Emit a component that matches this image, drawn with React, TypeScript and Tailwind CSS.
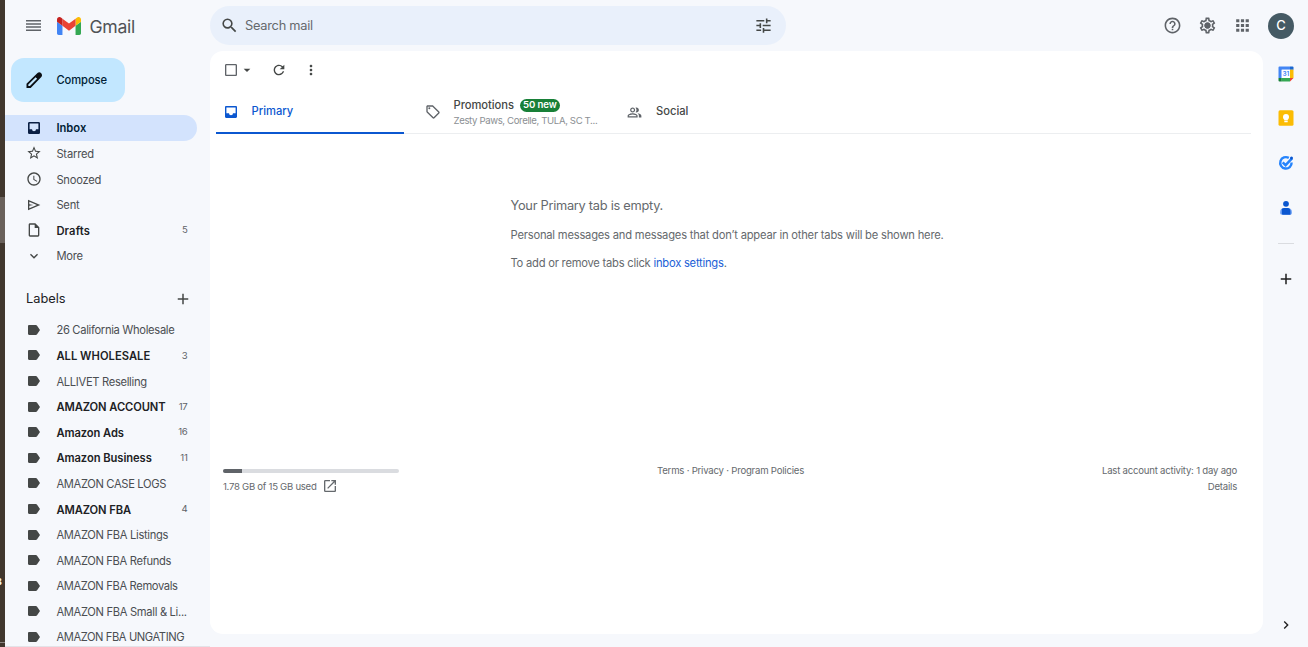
import React from "react";
import type { IconType } from "react-icons";
import {
  MdSearch, MdTune, MdHelpOutline, MdOutlineSettings, MdApps, MdStarBorder, MdAccessTime,
  MdOutlineInsertDriveFile, MdKeyboardArrowDown, MdAdd, MdOutlineSell,
  MdOutlinePeopleAlt, MdRefresh, MdMoreVert, MdArrowDropDown, MdCheckBoxOutlineBlank, MdOpenInNew, MdChevronRight,
} from "react-icons/md";

type IconProps = { className?: string };
type Row = { icon?: IconType | React.FC<IconProps>; text: string; count?: string; bold?: boolean; active?: boolean; track: string };

function InboxIcon({ className }: IconProps) {
  return (
    <svg viewBox="0 0 24 24" className={className} fill="currentColor">
      <path fillRule="evenodd" d="M5 3h14a2 2 0 0 1 2 2v14a2 2 0 0 1-2 2H5a2 2 0 0 1-2-2V5c0-1.100.9-2 2-2zm.4 2.400V14H9a3 3 0 0 0 6 0h3.600V5.400z" />
    </svg>
  );
}

function SendIcon({ className }: IconProps) {
  return (
    <svg viewBox="0 0 24 24" className={className} fill="currentColor" fillRule="evenodd">
      <path d="M3 20V4l18.500 8L3 20zm2-3.200L16.300 12 5 7.200v3.500l6 1.300-6 1.300z" />
    </svg>
  );
}

function LabelIcon({ className }: IconProps) {
  return (
    <svg viewBox="0 0 16 16" className={className} fill="currentColor">
      <path d="M3.200 3h6.600c.5 0 1 .25 1.300.7L14 8l-2.900 4.300c-.3.450-.8.7-1.300.7H3.200C2.500 13 2 12.500 2 11.800V4.200C2 3.500 2.500 3 3.200 3z" />
    </svg>
  );
}

function SettingsIcon({ className }: IconProps) {
  return (
    <svg viewBox="0 0 24 24" className={className} fill="currentColor">
      <MdOutlineSettings width="24" height="24" size={24} />
      <circle cx="12" cy="12" r="3.600" />
    </svg>
  );
}

const folders: Row[] = [
  { icon: InboxIcon, text: "Inbox", bold: true, active: true, track: "tracking-[0px]" },
  { icon: MdStarBorder, text: "Starred", track: "tracking-[-0.2px]" },
  { icon: MdAccessTime, text: "Snoozed", track: "tracking-[-0.25px]" },
  { icon: SendIcon, text: "Sent", track: "tracking-[-0.2px]" },
  { icon: MdOutlineInsertDriveFile, text: "Drafts", count: "5", bold: true, track: "tracking-[0.15px]" },
  { icon: MdKeyboardArrowDown, text: "More", track: "tracking-[-0.25px]" },
];

const labels: Row[] = [
  { text: "26 California Wholesale", track: "tracking-[-0.32px]" },
  { text: "ALL WHOLESALE", count: "3", bold: true, track: "tracking-[0.03px]" },
  { text: "ALLIVET Reselling", track: "tracking-[-0.32px]" },
  { text: "AMAZON ACCOUNT", count: "17", bold: true, track: "tracking-[-0.08px]" },
  { text: "Amazon Ads", count: "16", bold: true, track: "tracking-[-0.08px]" },
  { text: "Amazon Business", count: "11", bold: true, track: "tracking-[-0.06px]" },
  { text: "AMAZON CASE LOGS", track: "tracking-[-0.34px]" },
  { text: "AMAZON FBA", count: "4", bold: true, track: "tracking-[-0.08px]" },
  { text: "AMAZON FBA Listings", track: "tracking-[-0.32px]" },
  { text: "AMAZON FBA Refunds", track: "tracking-[-0.34px]" },
  { text: "AMAZON FBA Removals", track: "tracking-[-0.36px]" },
  { text: "AMAZON FBA Small & Li...", track: "tracking-[-0.32px]" },
  { text: "AMAZON FBA UNGATING", track: "tracking-[-0.42px]" },
];

function NavRow({ row }: { row: Row }) {
  const Icon = row.icon ?? LabelIcon;
  return (
    <div
      className={
        "flex h-[25.6px] w-[192px] shrink-0 items-center rounded-r-full pl-[21px] pr-[9.5px] text-[11.2px] whitespace-nowrap " +
        (row.active ? "bg-[#d3e3fd] text-[#001d35]" : row.bold ? "text-[#202124]" : "text-[#4b4e52]")
      }
    >
      <Icon className={"size-4 shrink-0 " + (row.active ? "text-[#0a1f44]" : "text-[#444746]")} />
      <span className={"ml-[14.4px] flex-1 pt-[2px] " + row.track + (row.bold ? " font-semibold" : "")}>{row.text}</span>
      {row.count && <span className="pt-px text-[9.6px] tracking-[-0.3px] text-[#5f6368]">{row.count}</span>}
    </div>
  );
}

function GmailLogo() {
  return (
    <svg viewBox="52 42 88 66" className="h-[18px] w-6">
      <path fill="#4285f4" d="M58 108h14V74L52 59v43c0 3.32 2.69 6 6 6" />
      <path fill="#34a853" d="M120 108h14c3.32 0 6-2.69 6-6V59l-20 15" />
      <path fill="#fbbc04" d="M120 48v26l20-15v-8c0-7.42-8.47-11.65-14.4-7.2" />
      <path fill="#ea4335" d="M72 74V48l24 18 24-18v26L96 92" />
      <path fill="#c5221f" d="M52 51v8l20 15V48l-5.6-4.2c-5.94-4.45-14.4-.22-14.4 7.2" />
    </svg>
  );
}

function Sidebar() {
  return (
    <aside className="flex h-full w-[205px] shrink-0 flex-col overflow-hidden border-b border-[#e3e3e8]">
      <div className="flex h-[51px] shrink-0 items-center pl-[21px]">
        <svg viewBox="0 0 15 11" className="h-[11px] w-[15px]" fill="#5f6368">
          <path d="M0 0h15v1.500H0zM0 3.200h15v1.500H0zM0 6.300h15v1.500H0zM0 9.500h15v1.500H0z" />
        </svg>
        <div className="ml-[16px] flex items-center"><GmailLogo /></div>
        <span className="ml-[8.5px] pt-[2px] text-[17.6px] leading-none tracking-[-0.3px] text-[#505356]">Gmail</span>
      </div>
      <div className="mt-[7px] ml-[6px] flex h-[44px] w-[114px] shrink-0 items-center rounded-[13px] bg-[#c2e7ff] pl-[13px]">
        <svg viewBox="0 0 24 24" className="h-[20px] w-[20px]" fill="#0b0f14">
          <path fillRule="evenodd" d="M20.400 3.600c-1.200-1.200-3-1.200-4.200 0L3 16.500V21.500h5L20.800 8.400c1.300-1.300 1-3.400-.4-4.800zM7.100 19.300H5.200v-1.900L13.900 8.700l1.900 1.900z" />
        </svg>
        <span className="ml-[12.4px] text-[11.2px] font-medium tracking-[-0.08px] text-[#001d35]">Compose</span>
      </div>
      <nav className="mt-[13px] flex flex-col">
        {folders.map((r) => <NavRow key={r.text} row={r} />)}
      </nav>
      <div className="mt-[13px] flex h-[34.400px] shrink-0 items-center justify-between pr-[18px] pl-[21px] text-[12.8px] text-[#202124]">
        <span>Labels</span>
        <MdAdd className="size-[18px] text-[#444746]" />
      </div>
      <div className="flex flex-col pt-px">
        {labels.map((r) => <NavRow key={r.text} row={r} />)}
      </div>
    </aside>
  );
}

function Header() {
  return (
    <header className="flex h-[51px] shrink-0 items-center justify-between pr-[14px]">
      <div className="flex h-[39px] w-[576px] items-center rounded-full bg-[#e9f0fb] pr-[13px] pl-[10px]">
        <MdSearch className="size-[19px] text-[#444746]" />
        <span className="ml-[6px] flex-1 text-[12.8px] tracking-[-0.25px] text-[#65696d]">Search mail</span>
        <MdTune className="size-[19px] text-[#444746]" />
      </div>
      <div className="flex items-center text-[#5f6368]">
        <MdHelpOutline className="size-[19px]" />
        <SettingsIcon className="ml-[16px] size-[19px]" />
        <MdApps className="ml-[16px] size-[19px]" />
        <div className="ml-[16px] flex size-[26px] items-center justify-center rounded-full bg-[#455a64] text-[13px] font-medium text-white">C</div>
      </div>
    </header>
  );
}

function Tabs() {
  return (
    <div className="mr-[12px] ml-[6px] flex h-[45px] border-b border-[#eceef0] text-[11.2px] font-medium text-[#444746]">
      <div className="relative flex w-[188px] items-center pl-[7px] text-[#0b57d0]">
        <svg viewBox="0 0 16 16" className="mt-[2px] size-4" fill="currentColor">
          <path fillRule="evenodd" d="M3.200 2h9.600c.7 0 1.200.5 1.200 1.200v9.600c0 .7-.5 1.200-1.200 1.200H3.200c-.7 0-1.200-.5-1.200-1.200V3.200C2 2.500 2.500 2 3.200 2zm.2 1.400v5.800H6a2 2 0 0 0 4 0h2.600V3.400z" />
        </svg>
        <span className="ml-[12.500px]">Primary</span>
        <div className="absolute inset-x-0 bottom-[-1px] h-[2px] bg-[#0b57d0]" />
      </div>
      <div className="ml-[14px] flex w-[188px] items-center pl-[7px]">
        <MdOutlineSell className="mt-[2px] size-4 shrink-0 text-[#5f6368]" />
        <div className="ml-[12.5px] flex flex-col pt-[4px]">
          <div className="flex h-[15px] items-center">
            <span className="tracking-[-0.05px]">Promotions</span>
            <span className="ml-[6px] flex h-[13px] w-[40px] items-center justify-center rounded-full bg-[#188038] text-[9.6px] font-semibold tracking-[-0.1px] text-white">50 new</span>
          </div>
          <span className="text-[9.6px] leading-[15px] font-normal tracking-[-0.37px] whitespace-nowrap text-[#8b8f93]">Zesty Paws, Corelle, TULA, SC T...</span>
        </div>
      </div>
      <div className="ml-[14px] flex items-center pl-[7px]">
        <MdOutlinePeopleAlt className="mt-[2px] size-[15px] text-[#5f6368]" />
        <span className="ml-[14px]">Social</span>
      </div>
    </div>
  );
}

function MailPanel() {
  return (
    <main className="flex h-[583px] w-[1053px] flex-col rounded-[13px] bg-white">
      <div className="flex h-[38px] shrink-0 items-center pl-[13px] text-[#5f6368]">
        <MdCheckBoxOutlineBlank className="size-4" />
        <MdArrowDropDown className="size-4 text-[#444746]" />
        <MdRefresh className="ml-[16px] size-4 text-[#444746]" />
        <MdMoreVert className="ml-[16px] size-4 text-[#444746]" />
      </div>
      <Tabs />
      <div className="mt-[62px] flex flex-col pl-[300.5px] whitespace-nowrap text-[#65696d]">
        <p className="h-[29px] text-[12.800px] leading-[19px] tracking-[-0.27px]">Your Primary tab is empty.</p>
        <p className="h-[28px] text-[11.2px] leading-[20px] tracking-[-0.21px]">Personal messages and messages that don’t appear in other tabs will be shown here.</p>
        <p className="text-[11.2px] leading-[20px] tracking-[-0.23px]">To add or remove tabs click <a className="text-[#1a5ed6]">inbox settings</a>.</p>
      </div>
      <footer className="mt-[190px] flex pr-[26px] pl-[13px] text-[9.6px] leading-[16px] tracking-[-0.22px] whitespace-nowrap text-[#65696d]">
        <div className="w-[434px]">
          <div className="flex h-[16px] items-center">
            <div className="h-[4px] w-[176px] overflow-hidden rounded-full bg-[#dadce0]">
              <div className="h-full w-[19px] bg-[#5f6368]" />
            </div>
          </div>
          <div className="flex h-[16px] items-center">
            <span className="tracking-[-0.28px]">1.78 GB of 15 GB used</span>
            <MdOpenInNew className="mb-[2px] ml-[6px] size-4" />
          </div>
        </div>
        <div className="flex-1">Terms · Privacy · Program Policies</div>
        <div className="text-right">
          <div>Last account activity: 1 day ago</div>
          <div>Details</div>
        </div>
      </footer>
    </main>
  );
}

function SidePanel() {
  return (
    <aside className="flex h-[582px] w-[45px] flex-col items-center pt-[15px]">
      <svg viewBox="0 0 16 16" className="size-4">
        <path fill="#4285f4" d="M1.500 0.500h10.500v3.200H3.700V12H.5V1.500a1 1 0 0 1 1-1z" />
        <path fill="#1967d2" d="M12 .5h2.500a1 1 0 0 1 1 1v2.200H12z" />
        <path fill="#fbbc04" d="M12 3.700h3.500V12H12z" />
        <path fill="#34a853" d="M3.700 12H12v3.500H3.700z" />
        <path fill="#188038" d="M.5 12h3.200v3.500H1.500a1 1 0 0 1-1-1z" />
        <path fill="#ea4335" d="M12 12h3.500L12 15.500z" />
        <path fill="#fff" d="M3.700 3.700H12V12H3.700z" />
        <text x="7.900" y="10.300" textAnchor="middle" fontSize="6.500" fontWeight="600" fill="#4285f4">31</text>
      </svg>
      <svg viewBox="0 0 16 16" className="mt-[28px] size-4">
        <rect x=".5" y=".3" width="15" height="15.400" rx="1.500" fill="#fbbc04" />
        <circle cx="8" cy="7" r="3" fill="#fff" />
        <path fill="#fff" d="M6.300 8h3.400v2.400H6.300zM6.300 11.100h3.400v1.200H6.300z" />
      </svg>
      <svg viewBox="0 0 16 16" className="mt-[29px] size-4" fill="none">
        <path d="M10.800 2.900A5.700 5.700 0 1 0 13.600 7.500" stroke="#2684fc" strokeWidth="2.400" />
        <path d="M4.700 7.300l2.900 2.900 6.400-6.800" stroke="#2684fc" strokeWidth="2.500" />
        <circle cx="13.500" cy="3" r="1.500" fill="#0b57d0" />
      </svg>
      <svg viewBox="0 0 16 16" className="mt-[29px] size-4">
        <circle cx="8" cy="3.800" r="2.900" fill="#0b57d0" />
        <path fill="#7baaf7" d="M2 12.500C2 9.500 3.500 8 6 8h4c2.500 0 4 1.500 4 4.500 0 1.500-.7 2.200-2 2.200H4c-1.300 0-2-.7-2-2.200z" />
        <path fill="#0b57d0" d="M3.800 9c.7-.7 1.500-1 2.500-1h3.400c1.800 0 2.800 1.400 2.800 3.200v3.500H4.800c-.8 0-1-.5-1-1.200z" />
      </svg>
      <div className="mt-[27px] h-px w-4 bg-[#dadce0]" />
      <MdAdd className="mt-[26px] size-[18px] text-[#1f1f1f]" />
      <MdChevronRight className="mt-auto size-4 text-[#1f1f1f]" />
    </aside>
  );
}

export default function App() {
  return (
    <div className="flex h-[647px] w-[1308px] overflow-hidden bg-[#f6f8fc] font-['Inter','Liberation_Sans',sans-serif]">
      <div className="flex w-[5px] shrink-0 flex-col overflow-hidden bg-[#41372e]">
        <div className="mt-[197px] h-[46px] shrink-0 bg-[#6a615b]" />
        <div className="mt-[333px] -ml-[4px] text-[9px] leading-[12px] font-bold text-white">8</div>
        <div className="mt-[54px] h-px shrink-0 bg-[#8a8580]" />
      </div>
      <Sidebar />
      <div className="flex min-w-0 flex-1 flex-col">
        <Header />
        <div className="flex">
          <MailPanel />
          <SidePanel />
        </div>
      </div>
    </div>
  );
}
